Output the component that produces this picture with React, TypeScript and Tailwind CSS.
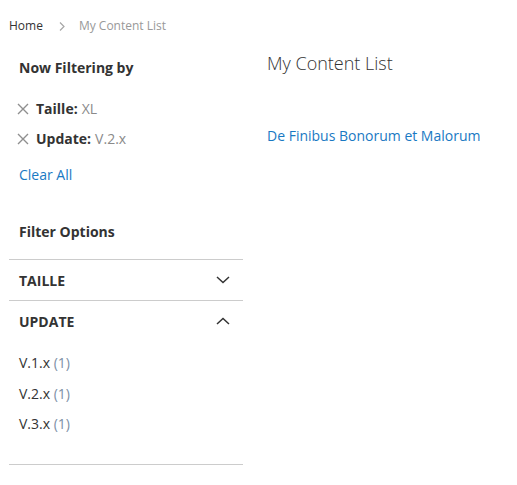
import React from 'react';

const font = { fontFamily: '"Open Sans", "Noto Sans", sans-serif' };

function XIcon() {
  return (
    <svg width="12" height="12" viewBox="0 0 12 12" className="shrink-0">
      <path d="M1 1L11 11M11 1L1 11" stroke="#8f8f8f" strokeWidth="1.4" fill="none" />
    </svg>
  );
}

function Chevron({ up }: { up?: boolean }) {
  return (
    <svg width="14" height="8" viewBox="0 0 14 8" className="shrink-0">
      <path
        d={up ? 'M1 7L7 1.5L13 7' : 'M1 1L7 6.5L13 1'}
        stroke="#333"
        strokeWidth="1.5"
        fill="none"
      />
    </svg>
  );
}

export default function App() {
  const active = [
    { label: 'Taille:', value: 'XL' },
    { label: 'Update:', value: 'V.2.x' },
  ];
  const versions = ['V.1.x', 'V.2.x', 'V.3.x'];

  return (
    <div className="min-h-[485px] bg-white px-[9px] text-[#333]" style={font}>
      {/* Breadcrumbs */}
      <div className="flex items-center pt-[18px] text-[12px] leading-[16px]">
        <span className="text-[#333]">Home</span>
        <svg width="6" height="9" viewBox="0 0 6 9" className="ml-[16px] mr-[14px] shrink-0">
          <path d="M1 0.5L5 4.5L1 8.5" stroke="#a6a6a6" strokeWidth="1.2" fill="none" />
        </svg>
        <span className="text-[#999]">My Content List</span>
      </div>

      <div className="flex">
        {/* Sidebar */}
        <aside className="w-[234px] shrink-0">
          <div className="px-[10px]">
            <div className="mt-[24px] text-[14px] font-bold leading-[20px]">Now Filtering by</div>
            <ul className="mt-[21px] flex flex-col gap-[10px]">
              {active.map((f) => (
                <li key={f.label} className="flex items-center text-[14px] leading-[20px]">
                  <span className="-ml-[2px] mr-[7px] flex">
                    <XIcon />
                  </span>
                  <span className="font-bold">{f.label}</span>
                  <span className="ml-[4px] text-[#8a8a8a]">{f.value}</span>
                </li>
              ))}
            </ul>
            <a className="mt-[16px] block text-[14px] leading-[20px] text-[#1979c3]">Clear All</a>
            <div className="mt-[37px] text-[14px] font-bold leading-[20px]">Filter Options</div>
          </div>

          <div className="mt-[17px] border-t border-[#cccccc]">
            <div className="flex h-[40px] items-center justify-between pl-[10px] pr-[13px] text-[14px] font-bold uppercase">
              <span>Taille</span>
              <Chevron />
            </div>
          </div>
          <div className="border-t border-[#cccccc]">
            <div className="flex h-[40px] items-center justify-between pl-[10px] pr-[13px] text-[14px] font-bold uppercase">
              <span>Update</span>
              <Chevron up />
            </div>
            <ul className="mt-[12px] flex flex-col gap-[10.5px] px-[10px] pb-[30px]">
              {versions.map((v) => (
                <li key={v} className="text-[14px] leading-[20px] text-[#333]">
                  {v} <span className="text-[#7d8fa6]">(1)</span>
                </li>
              ))}
            </ul>
          </div>
          <div className="border-t border-[#cccccc]" />
        </aside>

        {/* Main */}
        <main className="ml-[24px] flex-1">
          <h1 className="mt-[17px] text-[18px] font-light leading-[24px] text-[#333]">My Content List</h1>
          <a className="mt-[51px] block text-[14px] leading-[20px] text-[#1979c3]">
            De Finibus Bonorum et Malorum
          </a>
        </main>
      </div>
    </div>
  );
}
